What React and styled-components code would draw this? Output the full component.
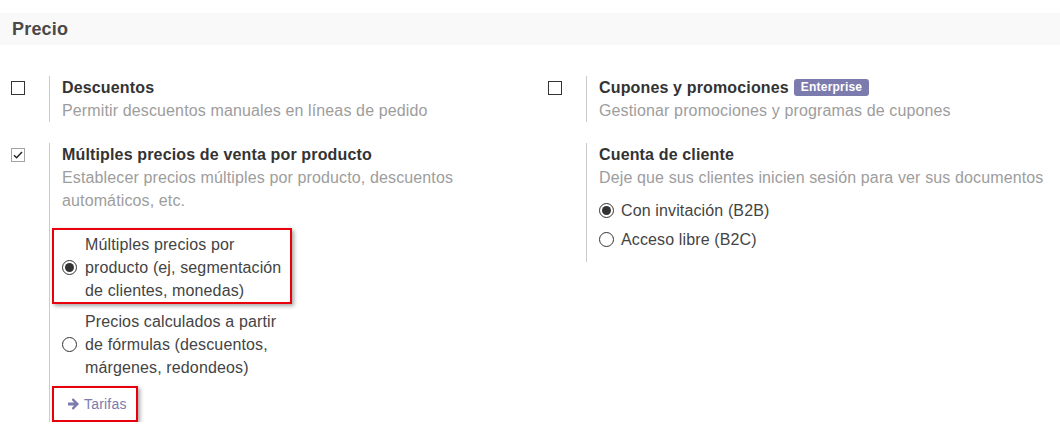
import React from "react";
import styled, { createGlobalStyle } from "styled-components";

const Global = createGlobalStyle`
  body {
    margin: 0;
    background: #fff;
    font-family: "Liberation Sans", Arial, sans-serif;
  }
`;

const Page = styled.div`
  width: 1060px;
  padding-top: 13px;
`;

const Header = styled.div`
  height: 32px;
  display: flex;
  align-items: center;
  padding-left: 12px;
  background: #f9f9f9;
  color: #4a4a4a;
  font-size: 18px;
  font-weight: bold;
  letter-spacing: 0.2px;
`;

const Grid = styled.div`
  display: grid;
  grid-template-columns: 537px 1fr;
  row-gap: 21px;
  margin-top: 31px;
  align-items: start;
`;

const Setting = styled.div`
  display: flex;
  align-items: flex-start;
`;

const CheckCol = styled.div`
  width: 38px;
  padding-left: 11px;
  padding-top: 5px;
  flex-shrink: 0;
`;

const Box = styled.span`
  display: block;
  width: 12px;
  height: 12px;
  border: 1px solid #333;
  background: #fff;
`;

const Panel = styled.div`
  border-left: 1px solid #ccc;
  padding-left: 12px;
  padding-bottom: ${(p) => p.$pb || 0}px;
  max-width: 460px;
`;

const Title = styled.div`
  display: flex;
  align-items: center;
  gap: 5px;
  font-size: 16px;
  font-weight: bold;
  line-height: 23px;
  letter-spacing: 0.15px;
  color: #333;
`;

const Badge = styled.span`
  display: inline-block;
  height: 17px;
  line-height: 17px;
  padding: 0 7px;
  border-radius: 3px;
  background: #7c7bad;
  color: #fff;
  font-size: 12px;
  font-weight: bold;
  letter-spacing: 0.2px;
`;

const Desc = styled.div`
  font-size: 16px;
  line-height: 23px;
  letter-spacing: 0.13px;
  color: #9d9d9d;
`;

const Option = styled.label`
  display: flex;
  align-items: center;
  gap: ${(p) => p.$gap || 8}px;
  margin-top: ${(p) => p.$mt || 0}px;
  font-size: 16px;
  line-height: 23px;
  letter-spacing: 0.13px;
  color: #444;
`;

const OptionText = styled.span`
  width: ${(p) => (p.$w ? p.$w + "px" : "auto")};
`;

const Radio = styled.span`
  position: relative;
  display: block;
  flex-shrink: 0;
  width: 13px;
  height: 13px;
  border: 1px solid #333;
  border-radius: 50%;
  background: #fff;
  &::after {
    content: "";
    display: ${(p) => (p.$on ? "block" : "none")};
    position: absolute;
    left: 2px;
    top: 2px;
    width: 9px;
    height: 9px;
    border-radius: 50%;
    background: #333;
  }
`;

const Highlight = styled.div`
  display: inline-block;
  margin-left: -10px;
  margin-top: ${(p) => p.$mt || 0}px;
  padding: ${(p) => p.$pad};
  border: 2px solid #e8000b;
  box-shadow: 2px 2px 4px rgba(0, 0, 0, 0.35);
`;

const Stack = styled.div`
  display: flex;
  flex-direction: column;
  align-items: flex-start;
`;

const Link = styled.a`
  display: flex;
  align-items: center;
  gap: 4px;
  color: #7c7bad;
  font-size: 14px;
  line-height: 24px;
  letter-spacing: 0.2px;
  text-decoration: none;
`;

const CheckedBox = () => (
  <svg width="14" height="14" viewBox="0 0 14 14" style={{ display: "block" }}>
    <rect x="0.5" y="0.5" width="13" height="13" fill="#fff" stroke="#444" strokeDasharray="1 1" />
    <path d="M3 7.2 L5.6 9.8 L11 4" fill="none" stroke="#222" strokeWidth="1.4" />
  </svg>
);

const Arrow = () => (
  <svg width="13" height="12" viewBox="0 0 13 12" style={{ display: "block" }}>
    <path
      d="M1 4.4 H7.2 L5 2.2 Q4.6 1.6 5.2 1.1 L5.8 0.6 Q6.3 0.2 6.8 0.7 L12 6 L6.8 11.3 Q6.3 11.8 5.8 11.4 L5.2 10.9 Q4.6 10.4 5 9.8 L7.2 7.6 H1.6 Q1 7.6 1 7 Z"
      fill="#7c7bad"
    />
  </svg>
);

export default function App() {
  return (
    <Page>
      <Global />
      <Header>Precio</Header>
      <Grid>
        <Setting>
          <CheckCol>
            <Box />
          </CheckCol>
          <Panel>
            <Title>Descuentos</Title>
            <Desc>Permitir descuentos manuales en líneas de pedido</Desc>
          </Panel>
        </Setting>

        <Setting>
          <CheckCol>
            <Box />
          </CheckCol>
          <Panel>
            <Title>
              Cupones y promociones <Badge>Enterprise</Badge>
            </Title>
            <Desc>Gestionar promociones y programas de cupones</Desc>
          </Panel>
        </Setting>

        <Setting>
          <CheckCol>
            <CheckedBox />
          </CheckCol>
          <Panel>
            <Title>Múltiples precios de venta por producto</Title>
            <Desc>
              Establecer precios múltiples por producto, descuentos automáticos, etc.
            </Desc>
            <Stack>
              <Highlight $mt={16} $pad="3px 5px 0 8px">
                <Option>
                  <Radio $on />
                  <OptionText $w={200}>
                    Múltiples precios por producto (ej, segmentación de clientes, monedas)
                  </OptionText>
                </Option>
              </Highlight>
              <Option $mt={6}>
                <Radio />
                <OptionText $w={200}>
                  Precios calculados a partir de fórmulas (descuentos, márgenes, redondeos)
                </OptionText>
              </Option>
              <Highlight $mt={7} $pad="4px 9px 4px 13px">
                <Link href="#">
                  <Arrow />
                  Tarifas
                </Link>
              </Highlight>
            </Stack>
          </Panel>
        </Setting>

        <Setting>
          <CheckCol />
          <Panel $pb={11}>
            <Title>Cuenta de cliente</Title>
            <Desc>Deje que sus clientes inicien sesión para ver sus documentos</Desc>
            <Option $mt={10} $gap={7}>
              <Radio $on />
              <OptionText>Con invitación (B2B)</OptionText>
            </Option>
            <Option $mt={6} $gap={7}>
              <Radio />
              <OptionText>Acceso libre (B2C)</OptionText>
            </Option>
          </Panel>
        </Setting>
      </Grid>
    </Page>
  );
}
